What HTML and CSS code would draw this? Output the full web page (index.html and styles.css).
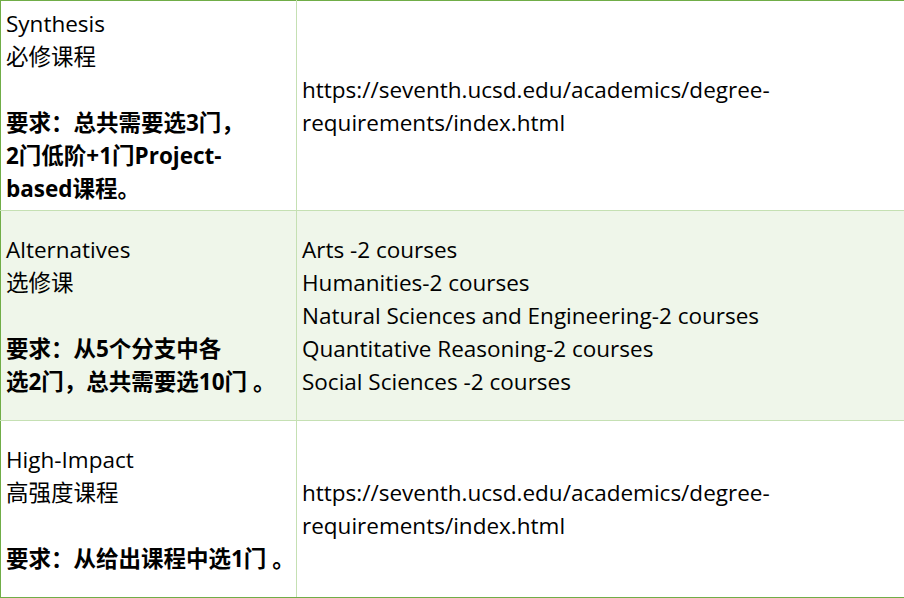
FILE: index.html
```html
<!DOCTYPE html>
<html lang="zh">
<head>
<meta charset="utf-8">
<link rel="stylesheet" href="styles.css">
</head>
<body>
<table class="grid">
  <colgroup><col class="c1"><col class="c2"></colgroup>
  <tr class="r1">
    <td class="left">Synthesis<br>必修课程<br><br><b>要求：总共需要选3门，<br>2门低阶+1门Project-<br>based课程。</b></td>
    <td class="right">https://seventh.ucsd.edu/academics/degree-<br>requirements/index.html</td>
  </tr>
  <tr class="r2">
    <td class="left">Alternatives<br>选修课<br><br><b>要求：从5个分支中各<br>选2门，总共需要选10门 。</b></td>
    <td class="right">Arts -2 courses<br>Humanities-2 courses<br>Natural Sciences and Engineering-2 courses<br>Quantitative Reasoning-2 courses<br>Social Sciences -2 courses</td>
  </tr>
  <tr class="r3">
    <td class="left">High-Impact<br>高强度课程<br><br><b>要求：从给出课程中选1门 。</b></td>
    <td class="right">https://seventh.ucsd.edu/academics/degree-<br>requirements/index.html</td>
  </tr>
</table>
</body>
</html>
```
FILE: styles.css
```css
html, body {
  margin: 0;
  padding: 0;
  background: #ffffff;
}
.grid {
  width: 904px;
  border-collapse: collapse;
  table-layout: fixed;
  font-family: "Open Sans", "Noto Sans CJK SC", sans-serif;
  font-size: 22.5px;
  line-height: 33px;
  color: #000;
  border: 1px solid #70ad47;
}
.c1 { width: 296px; }
.c2 { width: 608px; }
.grid td {
  border: 1px solid #c5e0b3;
  vertical-align: middle;
  padding: 0 5px;
  white-space: nowrap;
}
.grid tr:first-child td { border-top: 1px solid #70ad47; }
.grid tr:last-child td { border-bottom: 1px solid #70ad47; }
.grid td.left { border-left: 1px solid #70ad47; }
.grid td.right { border-right: 1px solid #70ad47; }
.r1 { height: 210px; }
.r2 { height: 210px; background: #eff6ea; }
.r3 { height: 177px; }
b { font-weight: 700; }
```
